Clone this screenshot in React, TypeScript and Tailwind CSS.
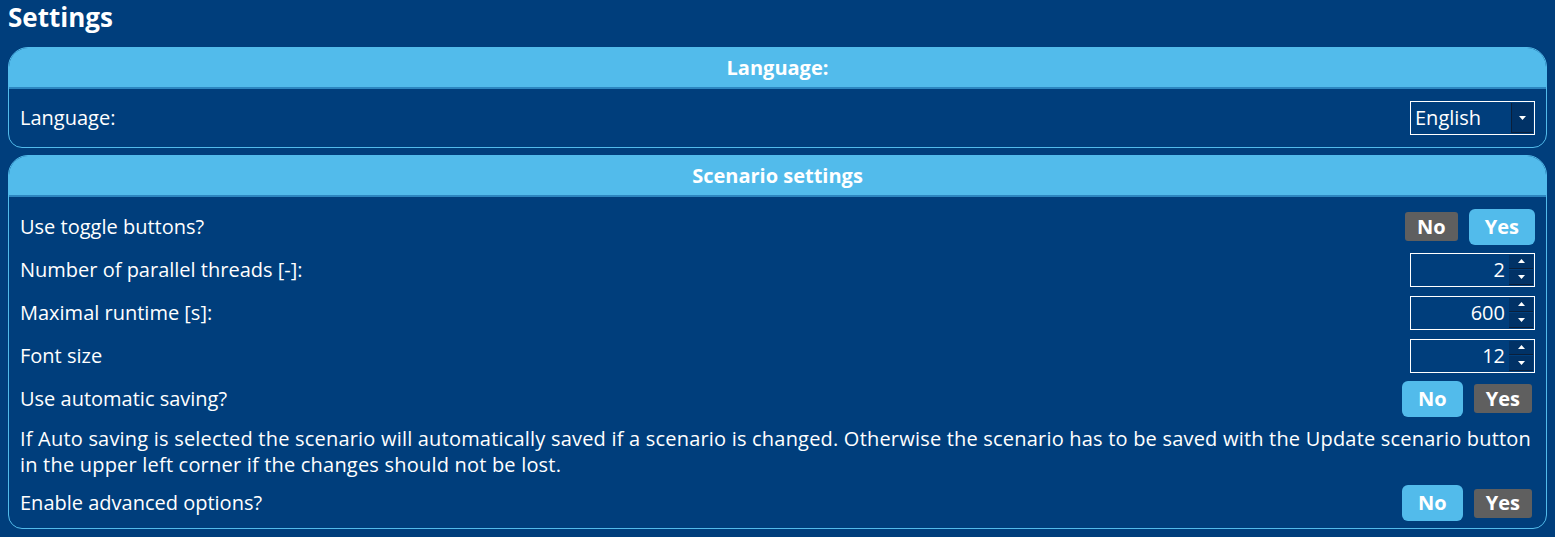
import React from "react";

const font = { fontFamily: "'Open Sans', 'Noto Sans', sans-serif" };

type ToggleProps = { value: boolean };

const Toggle = ({ value }: ToggleProps) => {
  const on = "bg-[#52bbeb] rounded-md px-[16px] h-[36px] text-[20px]";
  const off = "bg-[#5f5f5f] rounded-[3px] px-[12px] h-[29px] text-[20px]";
  return (
    <div className="flex items-center gap-[11px] font-bold text-white">
      <div className={`flex items-center ${value ? off : on}`}>No</div>
      <div className={`flex items-center ${value ? on : off + " mr-[3px]"}`}>Yes</div>
    </div>
  );
};

const NumberBox = ({ value }: { value: number }) => (
  <div className="flex w-[125px] h-[34px] border border-white text-white">
    <div className="flex-1 flex items-center justify-end pr-[4px] text-[20px]">{value}</div>
    <div className="flex flex-col w-[25px] py-px pr-px gap-px">
      <div className="flex-1 bg-[#013266] border-b border-[#0b1f3a] flex items-center justify-center">
        <svg width="7" height="4" viewBox="0 0 7 4"><path d="M0 4 L3.5 0 L7 4Z" fill="white" /></svg>
      </div>
      <div className="flex-1 bg-[#013266] border-b border-[#0b1f3a] flex items-center justify-center">
        <svg width="7" height="4" viewBox="0 0 7 4"><path d="M0 0 L3.5 4 L7 0Z" fill="white" /></svg>
      </div>
    </div>
  </div>
);

const Card = ({ title, children }: { title: string; children: React.ReactNode }) => (
  <div className="border border-[#52bbeb] rounded-t-[20px] rounded-b-[14px] overflow-hidden">
    <div className="h-[41px] bg-[#52bbeb] border-b-2 border-[#2d86c0] flex items-center justify-center text-white font-bold text-[20px]">
      {title}
    </div>
    <div className="px-[11px]">{children}</div>
  </div>
);

const Row = ({ label, children, h = "h-[43px]" }: { label: string; children: React.ReactNode; h?: string }) => (
  <div className={`flex items-center justify-between ${h}`}>
    <span className="text-[20px] text-white">{label}</span>
    {children}
  </div>
);

export default function App() {
  return (
    <div className="w-[1555px] h-[537px] bg-[#003e7c] px-[8px]" style={font}>
      <div className="h-[47px] text-white font-bold text-[26px] leading-[34px]">Settings</div>
      <div className="flex flex-col gap-[7px]">
        <Card title="Language:">
          <Row label="Language:" h="h-[58px]">
            <div className="flex w-[125px] h-[34px] border border-white text-white">
              <div className="flex-1 flex items-center pl-[4px] text-[20px]">English</div>
              <div className="w-[22px] my-px mr-px bg-[#013266] border-l border-b border-[#0b1f3a] flex items-center justify-center">
                <svg width="7" height="4" viewBox="0 0 7 4"><path d="M0 0 L3.5 4 L7 0Z" fill="white" /></svg>
              </div>
            </div>
          </Row>
        </Card>
        <Card title="Scenario settings">
          <div className="pt-[8px]">
            <Row label="Use toggle buttons?">
              <Toggle value={true} />
            </Row>
            <Row label="Number of parallel threads [-]:">
              <NumberBox value={2} />
            </Row>
            <Row label="Maximal runtime [s]:">
              <NumberBox value={600} />
            </Row>
            <Row label="Font size">
              <NumberBox value={12} />
            </Row>
            <Row label="Use automatic saving?">
              <Toggle value={false} />
            </Row>
            <p className="text-[20px] text-white leading-[26px] pt-[6px] tracking-[0.2px]">
              If Auto saving is selected the scenario will automatically saved if a scenario is changed. Otherwise the scenario has to be saved with the Update scenario button in the upper left corner if the changes should not be lost.
            </p>
            <Row label="Enable advanced options?" h="h-[50px]">
              <Toggle value={false} />
            </Row>
          </div>
        </Card>
      </div>
    </div>
  );
}
